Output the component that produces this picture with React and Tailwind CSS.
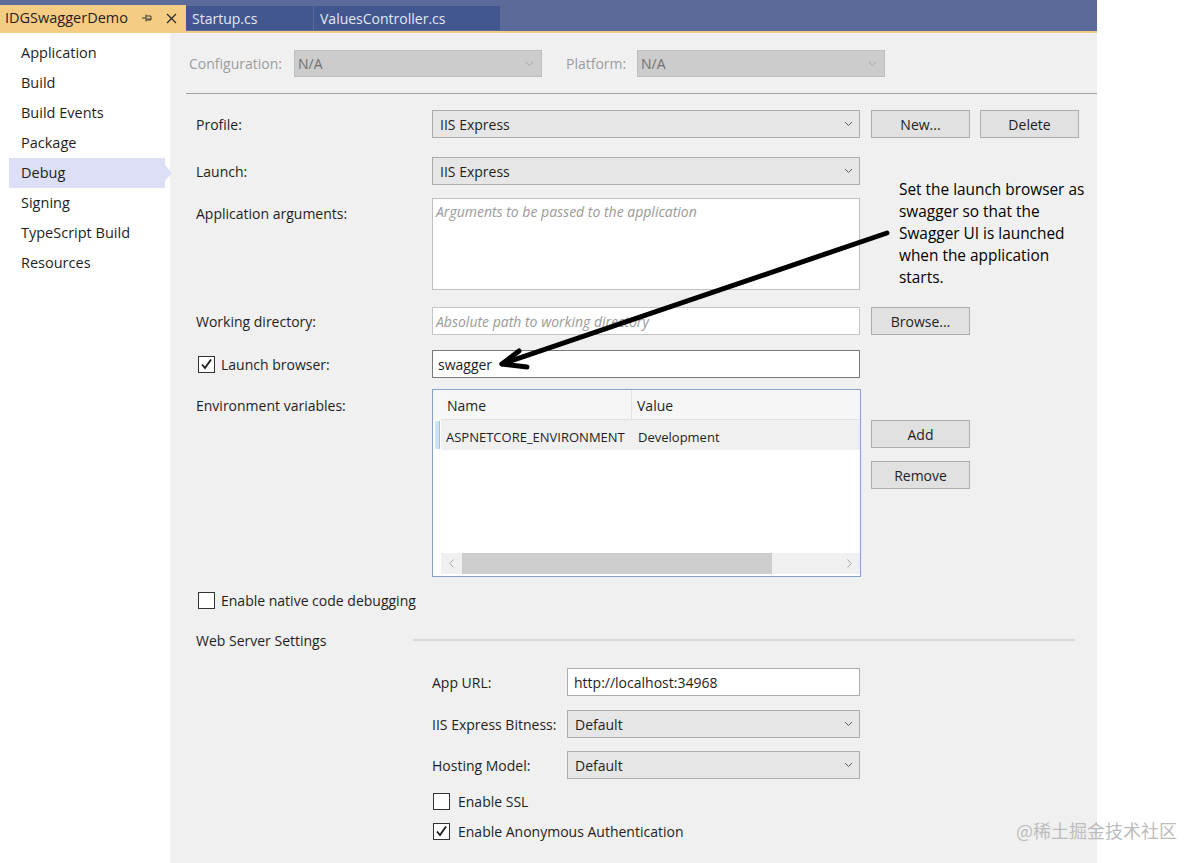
import React from "react";

const FONT = "font-['Open_Sans','Noto_Sans',sans-serif]";

function Chevron({ color = "#5a5a5a" }) {
  return (
    <svg width="9" height="6" viewBox="0 0 9 6">
      <path d="M1 1 L4.5 4.5 L8 1" fill="none" stroke={color} strokeWidth="1" />
    </svg>
  );
}

function Check() {
  return (
    <svg width="13" height="13" viewBox="0 0 13 13">
      <path d="M2 6.5 L5 10 L11 1.5" fill="none" stroke="#1a1a1a" strokeWidth="1.8" />
    </svg>
  );
}

function CheckBox({ checked }) {
  return (
    <div className="w-[17px] h-[17px] bg-white border border-[#333333] flex items-center justify-center shrink-0">
      {checked ? <Check /> : null}
    </div>
  );
}

function Select({ value, w }) {
  return (
    <div
      className={`${w} h-[28px] bg-[#e6e6e6] border border-[#acacac] flex items-center justify-between pl-[7px] pr-[6px] text-[14px] text-[#1e1e1e]`}
    >
      <span>{value}</span>
      <Chevron />
    </div>
  );
}

function Button({ children }) {
  return (
    <div className="w-[99px] h-[28px] bg-[#e1e1e1] border border-[#adadad] flex items-center justify-center text-[14px] text-[#1e1e1e] shrink-0">
      {children}
    </div>
  );
}

function Label({ children }) {
  return <div className="ml-[26px] w-[236px] shrink-0 text-[14px] text-[#1e1e1e]">{children}</div>;
}

const navItems = ["Application", "Build", "Build Events", "Package", "Debug", "Signing", "TypeScript Build", "Resources"];

export default function App() {
  return (
    <div className={`relative w-[1200px] h-[863px] bg-white overflow-hidden ${FONT}`}>
      <div className="w-[1097px] h-full flex flex-col">
        {/* Tab bar */}
        <div className="h-[31px] bg-[#5c6a99] flex items-end shrink-0">
          <div className="w-[186px] h-[26px] bg-[#f5cc84] flex items-center pl-[5px] text-[14.5px] text-[#1e1e1e]">
            <span>IDGSwaggerDemo</span>
            <svg className="ml-[14px]" width="11" height="10" viewBox="0 0 11 10">
              <path d="M0 5 H4 M4 1.5 V8.5 M4 3 H9 V7 H4 M5 6 H9" fill="none" stroke="#3a3a3a" strokeWidth="1" />
            </svg>
            <svg className="ml-[13px]" width="11" height="11" viewBox="0 0 11 11">
              <path d="M1 1 L10 10 M10 1 L1 10" fill="none" stroke="#2a2a2a" strokeWidth="1.2" />
            </svg>
          </div>
          <div className="w-[127px] h-[24px] mb-[1px] bg-[#42568f] flex items-center pl-[6px] text-[14px] text-[#e4e8f2]">
            Startup.cs
          </div>
          <div className="ml-[1px] w-[186px] h-[24px] mb-[1px] bg-[#42568f] flex items-center pl-[6px] text-[14px] text-[#e4e8f2]">
            ValuesController.cs
          </div>
        </div>
        <div className="h-[2px] bg-[#f5cc84] shrink-0" />

        <div className="flex flex-1">
          {/* Sidebar */}
          <div className="w-[170px] bg-white pt-[5px] shrink-0">
            {navItems.map((item) =>
              item === "Debug" ? (
                <div key={item} className="relative ml-[9px] w-[156px] h-[30px] bg-[#dcdff6] flex items-center pl-[12px] text-[14.5px] text-[#1e1e1e]">
                  {item}
                  <div className="absolute left-full top-[7px] w-0 h-0 border-y-[8px] border-y-transparent border-l-[7px] border-l-[#dcdff6]" />
                </div>
              ) : (
                <div key={item} className="h-[30px] flex items-center pl-[21px] text-[14.5px] text-[#1e1e1e]">
                  {item}
                </div>
              )
            )}
          </div>

          {/* Main */}
          <div className="flex-1 bg-[#f0f0f0] flex flex-col">
            {/* Configuration row */}
            <div className="mt-[17px] ml-[19px] h-[27px] flex items-center text-[14px] text-[#9c9c9c]">
              <div className="w-[105px]">Configuration:</div>
              <div className="w-[248px] h-[27px] bg-[#cccccc] border border-[#bdbdbd] flex items-center justify-between pl-[3px] pr-[7px] text-[#707070]">
                <span>N/A</span>
                <Chevron color="#a8a8a8" />
              </div>
              <div className="ml-[24px] w-[71px]">Platform:</div>
              <div className="w-[248px] h-[27px] bg-[#cccccc] border border-[#bdbdbd] flex items-center justify-between pl-[3px] pr-[7px] text-[#707070]">
                <span>N/A</span>
                <Chevron color="#a8a8a8" />
              </div>
            </div>

            <div className="mt-[16px] ml-[16px] h-px bg-[#a0a0a0]" />

            {/* Profile */}
            <div className="mt-[16px] h-[28px] flex items-center">
              <Label>Profile:</Label>
              <Select value="IIS Express" w="w-[428px]" />
              <div className="ml-[11px]"><Button>New...</Button></div>
              <div className="ml-[10px]"><Button>Delete</Button></div>
            </div>

            {/* Launch */}
            <div className="mt-[19px] h-[28px] flex items-center">
              <Label>Launch:</Label>
              <Select value="IIS Express" w="w-[428px]" />
            </div>

            {/* App args */}
            <div className="mt-[13px] h-[92px] flex items-start">
              <div className="pt-[5px]"><Label>Application arguments:</Label></div>
              <div className="w-[428px] h-[92px] bg-white border border-[#bfbfbf] pl-[3px] pt-[2px] text-[14px] italic text-[#9a9a9a]">
                Arguments to be passed to the application
              </div>
            </div>

            {/* Working dir */}
            <div className="mt-[17px] h-[28px] flex items-center">
              <Label>Working directory:</Label>
              <div className="w-[428px] h-[28px] bg-white border border-[#c4c4c4] flex items-center pl-[3px] text-[14px] italic text-[#9a9a9a]">
                Absolute path to working directory
              </div>
              <div className="ml-[11px]"><Button>Browse...</Button></div>
            </div>

            {/* Launch browser */}
            <div className="mt-[15px] h-[28px] flex items-center">
              <div className="ml-[28px] w-[234px] shrink-0 flex items-center gap-[6px] text-[14px] text-[#1e1e1e]">
                <CheckBox checked />
                <span>Launch browser:</span>
              </div>
              <div className="w-[428px] h-[28px] bg-white border border-[#7a7a7a] flex items-center pl-[5px] pt-[1px] text-[14px] text-[#1e1e1e]">
                swagger
              </div>
            </div>

            {/* Env vars */}
            <div className="mt-[11px] h-[188px] flex items-start">
              <div className="pt-[6px]"><Label>Environment variables:</Label></div>
              <div className="w-[429px] h-[188px] bg-white border border-[#86a2c8] flex flex-col">
                <div className="h-[30px] flex shrink-0">
                  <div className="w-[8px] bg-[#f7f7f7]" />
                  <div className="w-[191px] bg-[#f6f6f6] border-r border-b border-[#e2e2e2] flex items-center pl-[6px] pt-[1px] text-[14px] text-[#1e1e1e]">Name</div>
                  <div className="flex-1 bg-[#f6f6f6] border-b border-[#e2e2e2] flex items-center pl-[5px] pt-[1px] text-[14px] text-[#1e1e1e]">Value</div>
                </div>
                <div className="h-[30px] flex shrink-0">
                  <div className="w-[8px] flex items-stretch py-[1px]">
                    <div className="ml-[2px] w-[5px] bg-[#cfe3f5] border-r border-[#9cc3e5]" />
                  </div>
                  <div className="flex-1 bg-[#f0f0f0] flex items-center pt-[6px] text-[13px] text-[#1e1e1e]">
                    <div className="w-[191px] pl-[5px]">ASPNETCORE_ENVIRONMENT</div>
                    <div className="pl-[6px]">Development</div>
                  </div>
                </div>
                <div className="flex-1" />
                <div className="h-[21px] mb-[2px] ml-[8px] bg-[#f0f0f0] flex items-center shrink-0">
                  <div className="w-[21px] flex items-center justify-center">
                    <svg width="5" height="9" viewBox="0 0 5 9"><path d="M4.5 0.5 L0.8 4.5 L4.5 8.5" fill="none" stroke="#a6a6a6" strokeWidth="1" /></svg>
                  </div>
                  <div className="w-[310px] h-full bg-[#cdcdcd]" />
                  <div className="flex-1" />
                  <div className="w-[21px] flex items-center justify-center">
                    <svg width="5" height="9" viewBox="0 0 5 9"><path d="M0.5 0.5 L4.2 4.5 L0.5 8.5" fill="none" stroke="#a6a6a6" strokeWidth="1" /></svg>
                  </div>
                </div>
              </div>
              <div className="ml-[10px] pt-[31px] flex flex-col gap-[13px]">
                <Button>Add</Button>
                <Button>Remove</Button>
              </div>
            </div>

            {/* Native code */}
            <div className="mt-[15px] h-[17px] ml-[28px] flex items-center gap-[6px] text-[14px] text-[#1e1e1e]">
              <CheckBox />
              <span>Enable native code debugging</span>
            </div>

            {/* Web server settings */}
            <div className="mt-[21px] h-[20px] flex items-center">
              <div className="ml-[26px] w-[217px] shrink-0 text-[14px] text-[#1e1e1e]">Web Server Settings</div>
              <div className="w-[662px] h-[2px] bg-[#d9d9d9]" />
            </div>

            {/* App URL */}
            <div className="mt-[18px] h-[28px] flex items-center">
              <div className="ml-[262px] w-[135px] shrink-0 text-[14px] text-[#1e1e1e]">App URL:</div>
              <div className="w-[293px] h-[28px] bg-white border border-[#acacac] flex items-center pl-[6px] text-[14px] text-[#1e1e1e]">
                http://localhost:34968
              </div>
            </div>

            <div className="mt-[14px] h-[28px] flex items-center">
              <div className="ml-[262px] w-[135px] shrink-0 text-[14px] text-[#1e1e1e]">IIS Express Bitness:</div>
              <Select value="Default" w="w-[293px]" />
            </div>

            <div className="mt-[13px] h-[28px] flex items-center">
              <div className="ml-[262px] w-[135px] shrink-0 text-[14px] text-[#1e1e1e]">Hosting Model:</div>
              <Select value="Default" w="w-[293px]" />
            </div>

            <div className="mt-[14px] h-[17px] ml-[263px] flex items-center gap-[8px] text-[14px] text-[#1e1e1e]">
              <CheckBox />
              <span>Enable SSL</span>
            </div>

            <div className="mt-[13px] h-[17px] ml-[263px] flex items-center gap-[8px] text-[14px] text-[#1e1e1e]">
              <CheckBox checked />
              <span>Enable Anonymous Authentication</span>
            </div>
          </div>
        </div>
      </div>

      {/* Annotation */}
      <div className="absolute left-[899px] top-[179px] text-[15.4px] leading-[22px] text-black">
        <div>Set the launch browser as</div>
        <div>swagger so that the</div>
        <div>Swagger UI is launched</div>
        <div>when the application</div>
        <div>starts.</div>
      </div>

      <svg className="absolute left-0 top-0 pointer-events-none" width="1200" height="863" viewBox="0 0 1200 863">
        <path d="M887 233 L502 364" fill="none" stroke="#000" strokeWidth="5" strokeLinecap="round" />
        <path d="M519 351 L502 364 L527 367" fill="none" stroke="#000" strokeWidth="5" strokeLinecap="round" strokeLinejoin="round" />
      </svg>

      {/* Watermark */}
      <div className="absolute left-[1016px] top-[817px] text-[18px] text-[#bcbcbc] font-['Noto_Sans_CJK_SC',sans-serif]">
        @稀土掘金技术社区
      </div>
    </div>
  );
}
